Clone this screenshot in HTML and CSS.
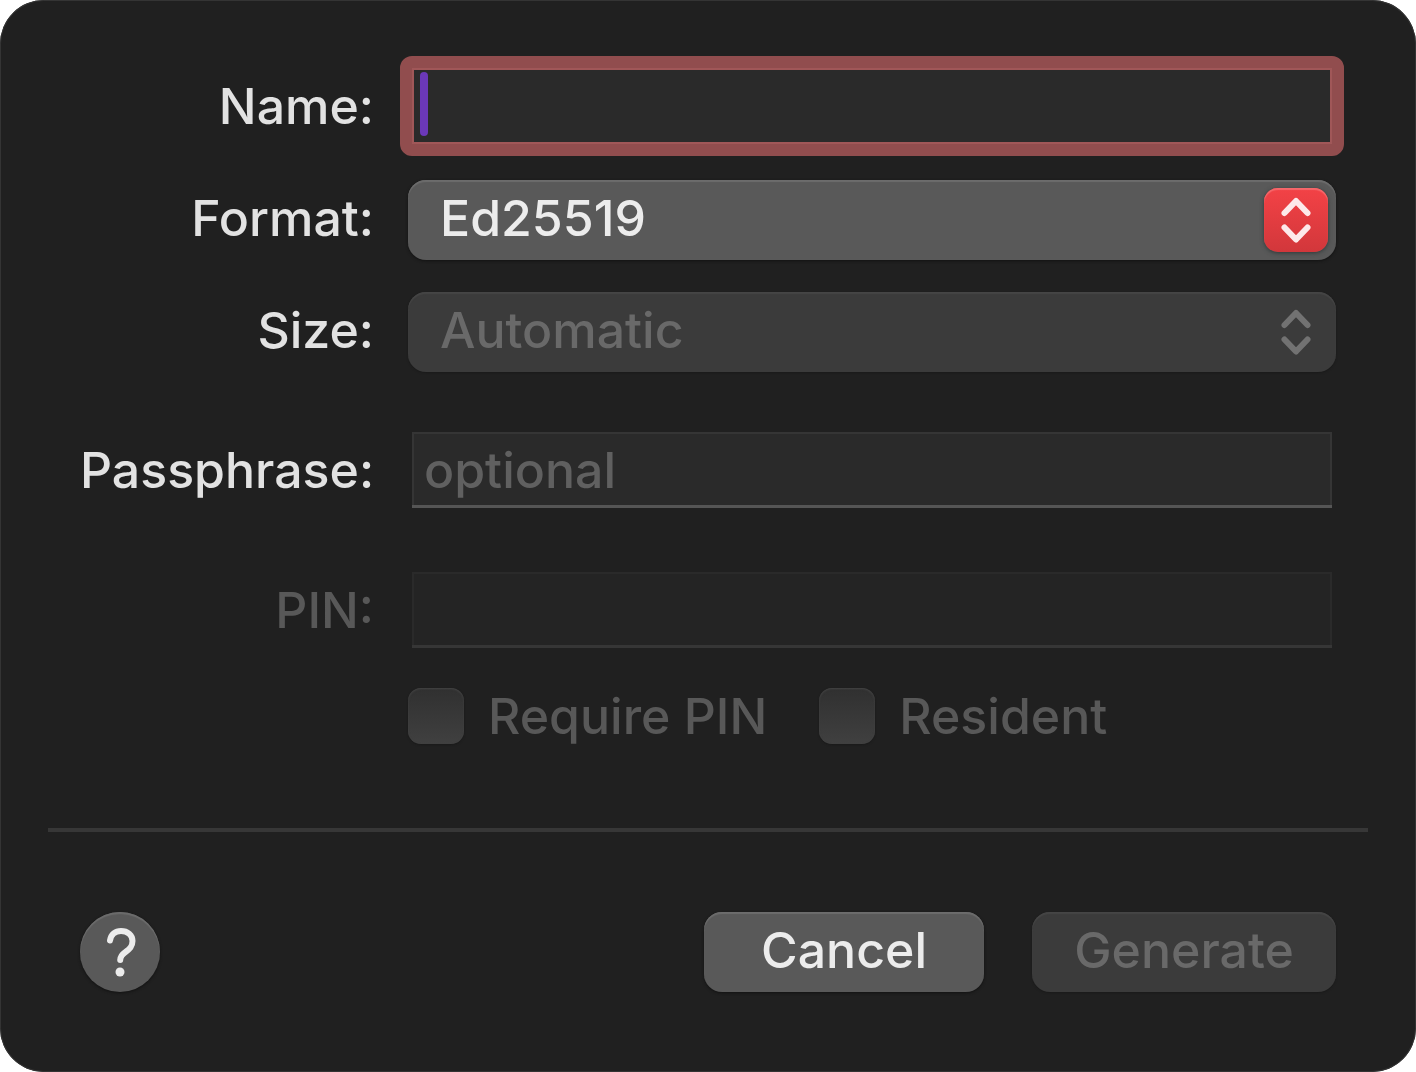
FILE: index.html
```html
<!DOCTYPE html>
<html lang="en">
<head>
<meta charset="utf-8">
<title>Generate Key</title>
<meta name="viewport" content="width=device-width, initial-scale=1">
<link rel="stylesheet" href="styles.css">
</head>
<body>
<form class="dialog">
  <div class="fields">
    <div class="row">
      <label class="label" for="name">Name:</label>
      <div class="control">
        <input class="textbox textbox-focused" id="name" type="text">
        <span class="caret"></span>
      </div>
    </div>
    <div class="row row-after-text">
      <label class="label" for="format">Format:</label>
      <div class="control">
        <select class="popup" id="format"><option>Ed25519</option></select>
        <span class="stepper stepper-accent">
          <svg class="chevrons" viewBox="0 0 64 64" aria-hidden="true"><path d="M20.500 25 32 13 43.500 25M20.500 39.500 32 51.500 43.500 39.500"/></svg>
        </span>
      </div>
    </div>
    <div class="row row-after-popup">
      <label class="label" for="size">Size:</label>
      <div class="control">
        <select class="popup" id="size" disabled><option>Automatic</option></select>
        <span class="stepper">
          <svg class="chevrons" viewBox="0 0 64 64" aria-hidden="true"><path d="M20.500 25 32 13 43.500 25M20.500 39.500 32 51.500 43.500 39.500"/></svg>
        </span>
      </div>
    </div>
    <div class="row row-section">
      <label class="label" for="passphrase">Passphrase:</label>
      <div class="control">
        <input class="textbox" id="passphrase" type="password" placeholder="optional">
      </div>
    </div>
    <div class="row row-section">
      <label class="label label-disabled" for="pin">PIN:</label>
      <div class="control">
        <input class="textbox" id="pin" type="password" disabled>
      </div>
    </div>
    <div class="row row-checks">
      <div class="checks">
        <label class="check"><input class="checkbox" type="checkbox" disabled>Require PIN</label>
        <label class="check"><input class="checkbox" type="checkbox" disabled>Resident</label>
      </div>
    </div>
  </div>
  <hr class="divider">
  <div class="footer">
    <button class="help" type="button" aria-label="Help">
      <svg class="help-icon" viewBox="0 0 80 80" aria-hidden="true"><path d="M30 28.500C31 22 35.500 19 41 19C47.500 19 52.500 23 52.500 29C52.500 34.500 49.500 37 45.500 40C42 42.500 40.200 44.500 40.200 48"/><circle cx="40" cy="60" r="4.500"/></svg>
    </button>
    <button class="button cancel" type="button">Cancel</button>
    <button class="button generate" type="submit" disabled>Generate</button>
  </div>
</form>
</body>
</html>
```
FILE: styles.css
```css
* {
  box-sizing: border-box;
}

body {
  margin: 0;
  background: #fff;
}

body,
input,
select,
button {
  font-family: Inter, "Liberation Sans", sans-serif;
  font-size: 50px;
  font-weight: 500;
}

.dialog {
  padding: 68px 48px 80px;
  border-radius: 44px;
  background: #202020;
  box-shadow: inset 0 0 0 1px #343434;
  color: #e2e2e2;
}

.fields {
  padding: 0 32px;
}

.row {
  display: grid;
  grid-template-columns: 294px minmax(0, 1fr);
  column-gap: 34px;
}

.row-after-text {
  margin-top: 36px;
}

.row-after-popup {
  margin-top: 32px;
}

.row-section {
  margin-top: 60px;
}

.row-section + .row-section {
  margin-top: 64px;
}

.row-checks {
  margin-top: 40px;
}

.label {
  line-height: 76px;
  text-align: right;
  white-space: nowrap;
}

.label-disabled {
  color: #585858;
}

.control {
  display: flex;
  position: relative;
}

/* Text fields */
.textbox {
  flex: 1;
  min-width: 0;
  height: 76px;
  margin: 0 4px;
  padding: 0 12px;
  border: 0;
  border-radius: 0;
  outline: none;
  background: #2a2a2a;
  box-shadow: inset 0 -3px #555, inset 0 0 0 2px #353535;
  color: #e2e2e2;
}

.textbox::placeholder {
  color: #606060;
  opacity: 1;
}

.textbox:disabled {
  background: #242424;
  box-shadow: inset 0 -3px #363636, inset 0 0 0 2px #2a2a2a;
}

/* The focus ring is the border, drawn outside the field's own box */
.textbox-focused {
  height: 100px;
  margin: -12px -8px;
  border: 12px solid #914d4e;
  border-radius: 12px;
  box-shadow: inset 0 0 0 2px #a05758;
}

.caret {
  position: absolute;
  top: 4px;
  left: 12px;
  width: 8px;
  height: 64px;
  border-radius: 4px;
  background: #6b38b8;
}

/* Pop-up menus */
.popup {
  flex: 1;
  min-width: 0;
  height: 80px;
  padding: 0 80px 4px 32px;
  border: 0;
  border-radius: 18px;
  outline: none;
  appearance: none;
  background: #595959;
  box-shadow: inset 0 2px 1px #6c6c6c, 0 1px 3px #121212;
  color: #ececec;
}

.popup:disabled {
  background: #3b3b3b;
  box-shadow: inset 0 2px 1px #454545, 0 1px 2px #1a1a1a;
  color: #696969;
  opacity: 1;
}

.stepper {
  position: absolute;
  top: 8px;
  right: 8px;
  width: 64px;
  height: 64px;
  border-radius: 14px;
  color: #727272;
  pointer-events: none;
}

.stepper-accent {
  background: linear-gradient(#f34246, #d2373b);
  box-shadow: inset 0 2px 1px #f5686b, 0 1px 4px #303838;
  color: #fde9ea;
}

.chevrons {
  display: block;
  width: 64px;
  height: 64px;
  fill: none;
  stroke: currentColor;
  stroke-width: 6;
  stroke-linecap: round;
  stroke-linejoin: round;
}

/* Check boxes */
.checks {
  display: flex;
  grid-column: 2;
  gap: 52px;
}

.check {
  display: flex;
  align-items: center;
  gap: 24px;
  height: 56px;
  color: #585858;
  white-space: nowrap;
}

.checkbox {
  flex: none;
  width: 56px;
  height: 56px;
  margin: 0;
  border-radius: 13px;
  appearance: none;
  background: linear-gradient(#303030, #404040);
  box-shadow: inset 0 1px 2px #454545, 0 1px 2px #1a1a1a;
}

.divider {
  height: 4px;
  margin: 84px 0 80px;
  border: 0;
  background: #373737;
}

/* Buttons */
.footer {
  display: flex;
  padding: 0 32px;
}

.button,
.help {
  height: 80px;
  border: 0;
  background: #595959;
  box-shadow: inset 0 2px 1px #6c6c6c, 0 1px 3px #121212;
  color: #ececec;
}

.button {
  padding: 0 0 4px;
  border-radius: 18px;
}

.button:disabled {
  background: #3b3b3b;
  box-shadow: inset 0 2px 1px #454545, 0 1px 2px #1a1a1a;
  color: #696969;
}

.cancel {
  width: 280px;
}

.generate {
  width: 304px;
  margin-left: 48px;
}

.help {
  width: 80px;
  margin-right: auto;
  padding: 0;
  border-radius: 50%;
}

.help-icon {
  display: block;
  width: 80px;
  height: 80px;
}

.help-icon path {
  fill: none;
  stroke: currentColor;
  stroke-width: 6;
  stroke-linecap: round;
}

.help-icon circle {
  fill: currentColor;
}
```
